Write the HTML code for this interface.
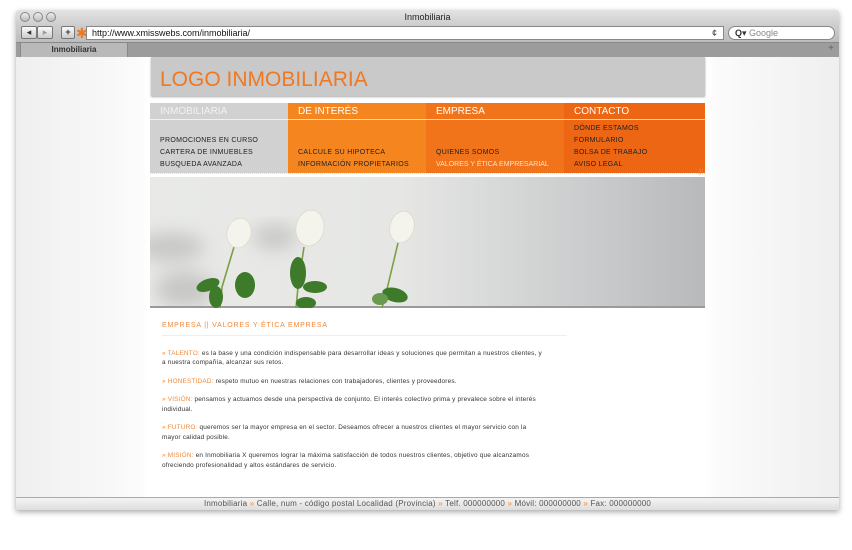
<!DOCTYPE html>
<html><head><meta charset="utf-8"><style>
*{margin:0;padding:0;box-sizing:border-box}
body{width:852px;height:550px;background:#fff;position:relative;overflow:hidden;font-family:"Liberation Sans","DejaVu Sans",sans-serif}
.win{position:absolute;left:16px;top:10px;width:823px;height:500px;background:#a9a9a9;box-shadow:0 2px 6px rgba(0,0,0,.35);border-radius:4px 4px 0 0}
.title{position:absolute;left:0;top:0;width:100%;height:14px;background:linear-gradient(#e3e3e3,#cfcfcf);border-radius:4px 4px 0 0;text-align:center;font-size:9px;line-height:14px;color:#222}
.dot{position:absolute;top:2px;width:10px;height:10px;border-radius:50%;border:1px solid #888;background:linear-gradient(#eee,#bbb)}
.tool{position:absolute;left:0;top:14px;width:100%;height:18px;background:linear-gradient(#cfcfcf,#bdbdbd)}
.btn{position:absolute;top:2px;height:13px;border:1px solid #777;border-radius:2px;background:linear-gradient(#fafafa,#ccc);font-size:9px;line-height:11px;text-align:center;color:#333}
.url{position:absolute;left:70px;top:2px;width:638px;height:14px;background:#fff;border:1px solid #888;font-size:9px;line-height:12px;padding-left:5px;color:#111}
.srch{position:absolute;left:712px;top:2px;width:107px;height:14px;background:#fff;border:1px solid #888;border-radius:8px;font-size:9px;line-height:12px;padding-left:6px;color:#888}
.tabs{position:absolute;left:0;top:32px;width:100%;height:15px;background:#9c9c9c;border-top:1px solid #888}
.tab{position:absolute;left:4px;top:0;width:108px;height:15px;background:#b9b9b9;border:1px solid #888;border-top:none;font-size:8px;font-weight:bold;text-align:center;line-height:13px;color:#333}
.content{position:absolute;left:0;top:47px;width:100%;height:440px;background:linear-gradient(90deg,#efefef,#fbfbfb 15%,#fff 16%,#fff 84%,#fbfbfb 85%,#efefef)}
.foot{position:absolute;left:0;top:487px;width:100%;height:13px;background:linear-gradient(#f4f4f4,#dedede);border-top:1px solid #aaa;font-size:8px;line-height:12px;text-align:center;color:#555;letter-spacing:.2px}
.foot b{color:#f08a3c;font-weight:normal}
.page{position:absolute;left:134px;top:0;width:555px;height:440px;background:#fff}
.logo{position:absolute;left:1px;top:0;width:554px;height:39px;background:#c9c9c9;color:#f07820;font-size:21px;line-height:45px;padding-left:9px;box-shadow:0 1px 2px #aaa}
.nav{position:absolute;top:46px;height:70px;width:138px}
.nav .h{height:17px;font-size:10px;color:#fff;padding-left:10px;line-height:18px;border-bottom:1px solid rgba(255,255,255,.7)}
.nav ul{list-style:none;position:absolute;bottom:2px;left:10px;font-size:7px;letter-spacing:.3px;line-height:12px;color:#222;white-space:nowrap}
.dl{position:absolute;left:0;top:116px;width:555px;border-top:1px dotted #ddd}
.txt{position:absolute;left:12px;top:264px;width:385px;font-size:6.4px;color:#333;line-height:9.5px;letter-spacing:.2px}
.txt .o{color:#f08a3c}
.txt p{margin-bottom:9px}
.hd{color:#f08a3c;font-size:7px;letter-spacing:.8px;padding-bottom:4px;border-bottom:1px solid #eee;margin-bottom:13px;width:405px}
</style></head><body>
<div class="win">
 <div class="title">Inmobiliaria
  <div class="dot" style="left:4px"></div><div class="dot" style="left:17px"></div><div class="dot" style="left:30px"></div></div>
 <div class="tool">
  <div class="btn" style="left:5px;width:16px">◂</div><div class="btn" style="left:21px;width:16px;color:#999">▸</div>
  <div class="btn" style="left:45px;width:14px;font-weight:bold">+</div>
  <div style="position:absolute;left:60px;top:0;color:#f07820;font-size:14px;line-height:18px">✱</div>
  <div class="url">http://www.xmisswebs.com/inmobiliaria/<span style="position:absolute;right:6px;color:#333">¢</span></div>
  <div class="srch"><b style="color:#333">Q▾</b> Google</div>
 </div>
 <div class="tabs"><div class="tab">Inmobiliaria</div><span style="position:absolute;right:5px;top:0;font-size:10px;color:#666">+</span></div>
 <div class="content">
  <div class="page">
   <div class="logo">LOGO INMOBILIARIA</div>
   <div class="nav" style="left:0;background:#d1d1d1"><div class="h" style="color:#f2f2f2">INMOBILIARIA</div><ul><li>PROMOCIONES EN CURSO</li><li>CARTERA DE INMUEBLES</li><li>BUSQUEDA AVANZADA</li></ul></div>
   <div class="nav" style="left:138px;background:#f5861f"><div class="h">DE INTERÉS</div><ul><li>CALCULE SU HIPOTECA</li><li>INFORMACIÓN PROPIETARIOS</li></ul></div>
   <div class="nav" style="left:276px;background:#f2741a"><div class="h">EMPRESA</div><ul><li>QUIENES SOMOS</li><li style="color:#fde0c8;letter-spacing:0">VALORES Y ÉTICA EMPRESARIAL</li></ul></div>
   <div class="nav" style="left:414px;width:141px;background:#ec6614"><div class="h">CONTACTO</div><ul><li>DÓNDE ESTAMOS</li><li>FORMULARIO</li><li>BOLSA DE TRABAJO</li><li>AVISO LEGAL</li></ul></div>
   <div class="dl"></div><span style="position:absolute;right:2px;top:112px;font-size:6px;color:#f08a3c">|||</span>
   <svg style="position:absolute;left:0;top:120px" width="555" height="131" viewBox="0 0 555 131">
    <defs><linearGradient id="g" x1="0" x2="1"><stop offset="0" stop-color="#e9eae8"/><stop offset=".45" stop-color="#e6e7e5"/><stop offset=".8" stop-color="#c9cbcc"/><stop offset="1" stop-color="#b7b9bb"/></linearGradient>
    <filter id="b"><feGaussianBlur stdDeviation="9"/></filter></defs>
    <rect width="555" height="131" fill="url(#g)"/>
    <g filter="url(#b)" fill="#b8b9b7" opacity=".7"><ellipse cx="20" cy="70" rx="35" ry="14"/><ellipse cx="35" cy="112" rx="30" ry="18"/><ellipse cx="125" cy="60" rx="22" ry="12"/></g>
    <rect y="129" width="555" height="2" fill="#9a9a9a"/>
    <g fill="none" stroke="#7aa040" stroke-width="1.6"><path d="M84 70 L72 110 L70 131"/><path d="M154 70 L148 110 L146 131"/><path d="M248 66 L238 108 L232 131"/></g>
    <g fill="#3d7a2a"><ellipse cx="58" cy="108" rx="12" ry="6" transform="rotate(-20 58 108)"/><ellipse cx="66" cy="120" rx="7" ry="11"/><ellipse cx="95" cy="108" rx="10" ry="13"/><ellipse cx="148" cy="96" rx="8" ry="16"/><ellipse cx="165" cy="110" rx="12" ry="6"/><ellipse cx="156" cy="126" rx="10" ry="6"/><ellipse cx="245" cy="118" rx="13" ry="7" transform="rotate(15 245 118)"/><ellipse cx="230" cy="122" rx="8" ry="6" fill="#6a9a50"/></g>
    <g fill="#f4f4ec" stroke="#d6d4c6" stroke-width=".6"><ellipse cx="89" cy="56" rx="12" ry="15" transform="rotate(15 89 56)"/><ellipse cx="160" cy="51" rx="14" ry="18" transform="rotate(10 160 51)"/><ellipse cx="252" cy="50" rx="12" ry="16" transform="rotate(15 252 50)"/></g>
   </svg>
   <div class="txt">
    <div class="hd">EMPRESA || VALORES Y ÉTICA EMPRESA</div>
    <p><span class="o">» TALENTO:</span> es la base y una condición indispensable para desarrollar ideas y soluciones que permitan a nuestros clientes, y a nuestra compañía, alcanzar sus retos.</p>
    <p><span class="o">» HONESTIDAD:</span> respeto mutuo en nuestras relaciones con trabajadores, clientes y proveedores.</p>
    <p><span class="o">» VISIÓN:</span> pensamos y actuamos desde una perspectiva de conjunto. El interés colectivo prima y prevalece sobre el interés individual.</p>
    <p><span class="o">» FUTURO:</span> queremos ser la mayor empresa en el sector. Deseamos ofrecer a nuestros clientes el mayor servicio con la mayor calidad posible.</p>
    <p><span class="o">» MISIÓN:</span> en Inmobiliaria X queremos lograr la máxima satisfacción de todos nuestros clientes, objetivo que alcanzamos ofreciendo profesionalidad y altos estándares de servicio.</p>
   </div>
  </div>
 </div>
 <div class="foot">Inmobiliaria <b>»</b> Calle, num - código postal Localidad (Provincia) <b>»</b> Telf. 000000000 <b>»</b> Móvil: 000000000 <b>»</b> Fax: 000000000</div>
</div>
</body></html>
